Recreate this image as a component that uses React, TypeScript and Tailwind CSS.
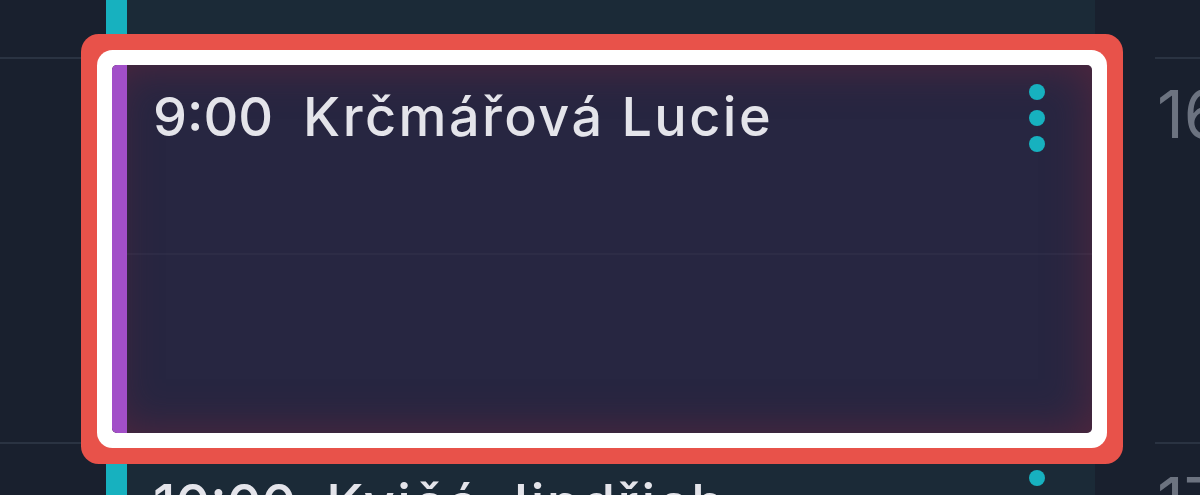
const font = { fontFamily: "Inter, 'Noto Sans', sans-serif" };

const Dots = ({ className = "" }: { className?: string }) => (
  <div className={`flex flex-col gap-[10px] shrink-0 ${className}`}>
    <span className="block w-4 h-4 rounded-full bg-[#17b1bf]" />
    <span className="block w-4 h-4 rounded-full bg-[#17b1bf]" />
    <span className="block w-4 h-4 rounded-full bg-[#17b1bf]" />
  </div>
);

const EventTitle = ({ time, name }: { time: string; name: string }) => (
  <div className="mt-[25px] ml-[26px] flex gap-[30px] text-[54px] leading-none font-medium text-[#e4e4ea] whitespace-nowrap">
    <span>{time}</span>
    <span className="tracking-[0.045em]">{name}</span>
  </div>
);

const App = () => {
  return (
    <div
      className="flex w-[1200px] h-[495px] overflow-hidden bg-[#19202e]"
      style={font}
    >
      {/* levý okraj s linkami hodin */}
      <div className="w-[106px] shrink-0 flex flex-col">
        <div className="h-[57px] shrink-0" />
        <div className="h-[385px] shrink-0 border-t-2 border-[#2a3342]" />
        <div className="shrink-0 border-t-2 border-[#2a3342]" />
      </div>

      {/* sloupec dne */}
      <div className="w-[989px] shrink-0 flex flex-col">
        <div className="h-[58px] shrink-0 flex bg-[#1b2a37]">
          <div className="w-[21px] bg-[#17b1bf]" />
        </div>

        {/* zvýrazněná událost */}
        <div className="relative z-10 shrink-0 mt-[7px] ml-[6px] mr-[3px] h-[368px] flex rounded-[5px] bg-[#272641] shadow-[inset_0_0_45px_rgba(120,38,58,0.55),0_0_0_15px_#ffffff,0_0_0_31px_#e8524a]">
          <div className="w-[15px] rounded-l-[5px] bg-[#a24fc8]" />
          <div className="flex-1 flex flex-col">
            <div className="h-[188px] shrink-0 flex items-start justify-between">
              <EventTitle time="9:00" name="Krčmářová Lucie" />
              <Dots className="mt-[19px] mr-[47px]" />
            </div>
            <div className="flex-1 border-t-2 border-white/[0.03]" />
          </div>
        </div>

        {/* další událost */}
        <div className="shrink-0 mt-[19px] h-[120px] flex bg-[#1b2a37]">
          <div className="w-[21px] bg-[#17b1bf]" />
          <div className="flex-1 flex items-start justify-between">
            <EventTitle time="10:00" name="Kvičá Jindřich" />
            <Dots className="mt-[18px] mr-[50px]" />
          </div>
        </div>
      </div>

      {/* pravý okraj s hodinami */}
      <div className="flex-1 flex flex-col pl-[60px]">
        <div className="h-[57px] shrink-0" />
        <div className="h-[385px] shrink-0 border-t-2 border-[#2a3342] pt-[22px] pl-[2px] text-[66px] leading-none text-[#6c7380]">
          16
        </div>
        <div className="shrink-0 border-t-2 border-[#2a3342] pt-[24px] pl-[2px] text-[66px] leading-none text-[#6c7380]">
          17
        </div>
      </div>
    </div>
  );
};

export default App;
